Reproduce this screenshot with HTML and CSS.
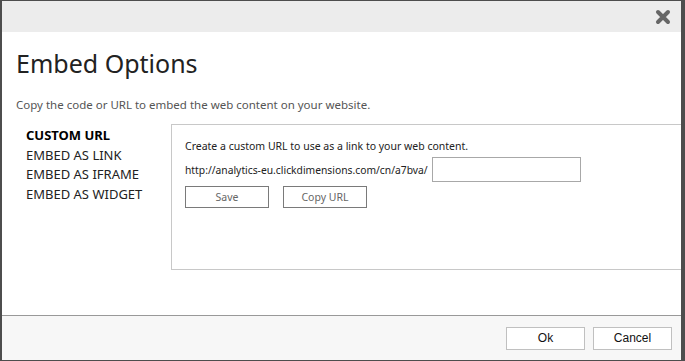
FILE: index.html
```html
<!DOCTYPE html>
<html lang="en">
<head>
  <meta charset="UTF-8" />
  <title>Embed Options</title>
  <link rel="stylesheet" href="styles.css">
</head>
<body>
  <div class="dialog">
    <div class="dialog-header">
      <button class="close-btn" aria-label="Close">
        <svg width="16" height="16" viewBox="0 0 16 16">
          <path d="M3 3 L13 13 M13 3 L3 13" stroke="#666" stroke-width="4" stroke-linecap="round" />
        </svg>
      </button>
    </div>

    <div class="dialog-body">
      <h1>Embed Options</h1>
      <p class="intro">Copy the code or URL to embed the web content on your website.</p>

      <div class="embed">
        <ul class="embed-nav">
          <li class="active">CUSTOM URL</li>
          <li>EMBED AS LINK</li>
          <li>EMBED AS IFRAME</li>
          <li>EMBED AS WIDGET</li>
        </ul>

        <div class="embed-panel">
          <p>Create a custom URL to use as a link to your web content.</p>
          <div class="url-row">
            <span>http://analytics-eu.clickdimensions.com/cn/a7bva/</span>
            <input type="text" class="url-input">
          </div>
          <div class="panel-actions">
            <button class="btn">Save</button>
            <button class="btn">Copy URL</button>
          </div>
        </div>
      </div>
    </div>

    <div class="dialog-footer">
      <button class="footer-btn">Ok</button>
      <button class="footer-btn">Cancel</button>
    </div>
  </div>
</body>
</html>
```

FILE: styles.css
```css
* {
  box-sizing: border-box;
}

body {
  margin: 0;
  background: #4d4d4d;
  font-family: 'Noto Sans', 'Open Sans', sans-serif;
  height: 361px;
  overflow: hidden;
}

.dialog {
  margin: 1px 0 0 2px;
  width: 679px;
  height: 359px;
  background: #fff;
  display: flex;
  flex-direction: column;
  overflow: hidden;
}

.dialog-header {
  height: 31px;
  background: #ececec;
  display: flex;
  justify-content: flex-end;
  align-items: center;
  padding-right: 10px;
}

.close-btn {
  background: none;
  border: none;
  padding: 0;
  cursor: pointer;
  display: flex;
}

.dialog-body {
  flex-grow: 1;
  padding: 0 0 0 14px;
}

h1 {
  margin: 14px 0 0;
  font-size: 25px;
  font-weight: 400;
  color: #222;
  line-height: 34px;
}

.intro {
  margin: 17px 0 0;
  font-size: 11.5px;
  color: #555;
}

.embed {
  display: flex;
  margin-top: 12px;
}

.embed-nav {
  list-style: none;
  margin: 0;
  padding: 2px 0 0 10px;
  width: 158px;
  font-size: 13px;
  color: #222;
}

.embed-nav li {
  line-height: 19.7px;
}

.embed-nav li.active {
  font-weight: 700;
  color: #000;
}

.embed-panel {
  width: 520px;
  height: 146px;
  border: 1px solid #c8c8c8;
  border-right: none;
  padding: 14px 13px;
  font-size: 10.5px;
  color: #222;
}

.embed-panel p {
  margin: 0 0 4px;
}

.url-row {
  display: flex;
  align-items: center;
  gap: 4px;
  font-size: 10.3px;
}

.url-input {
  width: 149px;
  height: 25px;
  border: 1px solid #a8a8a8;
  margin: 0;
}

.panel-actions {
  display: flex;
  gap: 14px;
  margin-top: 4px;
}

.btn {
  width: 84px;
  height: 22px;
  background: #fff;
  border: 1px solid #7a7a7a;
  font-family: inherit;
  font-size: 10.5px;
  color: #666;
  padding: 0;
}

.dialog-footer {
  height: 45px;
  border-top: 1px solid #999;
  background: #f7f7f7;
  display: flex;
  justify-content: flex-end;
  align-items: center;
  gap: 8px;
  padding: 0 9px 0 0;
}

.footer-btn {
  width: 79px;
  height: 23px;
  background: #fff;
  border: 1px solid #c0c0c0;
  font-family: 'Liberation Sans', Arial, sans-serif;
  font-size: 12px;
  color: #111;
  padding: 0;
}
```
